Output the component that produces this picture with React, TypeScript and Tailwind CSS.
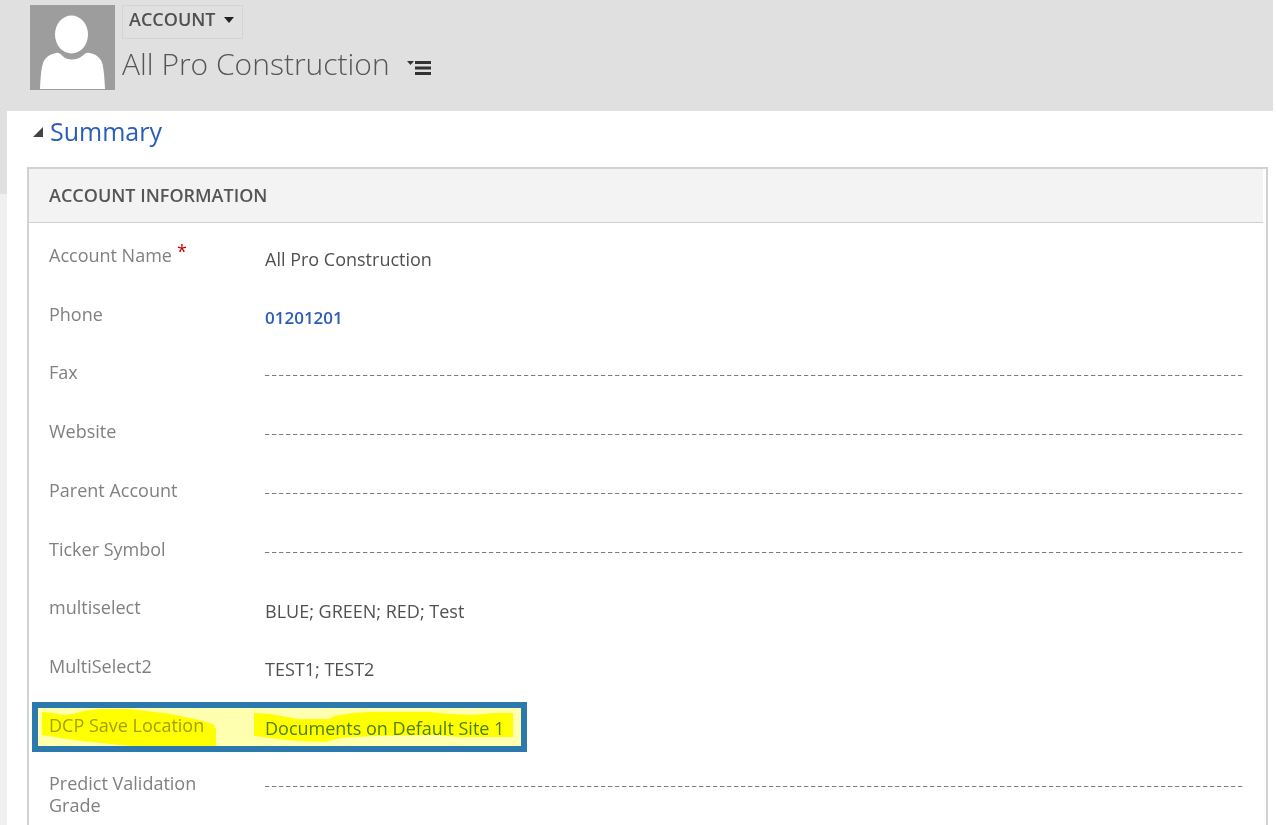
import { useState } from 'react'

type Field = {
  id: string
  label: string
  value?: string
  href?: string
  required?: boolean
  highlighted?: boolean
}

const fields: Field[] = [
  { id: 'name', label: 'Account Name', value: 'All Pro Construction', required: true },
  { id: 'phone', label: 'Phone', value: '01201201', href: 'tel:01201201' },
  { id: 'fax', label: 'Fax' },
  { id: 'website', label: 'Website' },
  { id: 'parent', label: 'Parent Account' },
  { id: 'ticker', label: 'Ticker Symbol' },
  { id: 'multiselect', label: 'multiselect', value: 'BLUE; GREEN; RED; Test' },
  { id: 'multiselect2', label: 'MultiSelect2', value: 'TEST1; TEST2' },
  { id: 'location', label: 'DCP Save Location', value: 'Documents on Default Site 1', highlighted: true },
  { id: 'grade', label: 'Predict Validation Grade' },
]

function Avatar() {
  return (
    <svg width="85" height="85" viewBox="0 0 85 85" role="img" aria-label="Account picture">
      <rect width="85" height="85" fill="#9d9d9d" />
      <ellipse cx="41.5" cy="29.5" rx="16.5" ry="19" fill="#fff" />
      <path
        d="M10 84C10.500 73 11 66 12.500 60C14 53 19 49.500 26 48C28.500 47.500 30 48.500 32 50.500C35 53.500 38.500 54.500 42 54.500C46 54.500 50 53 53.500 50C55.500 48 57 47.500 59.500 48C66 49 71 53 72.500 59C74 66 74.500 74 75 84Z"
        fill="#fff"
      />
    </svg>
  )
}

// Box and marker strokes drawn over the row
function Highlight() {
  return (
    <svg
      className="pointer-events-none absolute -left-[17px] -top-[12px] mix-blend-multiply"
      width="495"
      height="50"
      viewBox="0 0 495 50"
      aria-hidden="true"
    >
      <rect x="3" y="3" width="489" height="44" fill="#ffffb0" stroke="#2c79ae" strokeWidth="6" />
      <path
        d="M10 10L21 11L31 13L41 12L51 9L68 7L98 7L115 9L139 12L158 16L171 19L181 22L184 27L184 44L101 44L87 43L70 41L50 39L34 37L17 34L10 33Z"
        fill="#ffff00"
      />
      <path
        d="M222 11L239 12L255 15L266 17L297 17L302 14L321 11L337 10L397 10L418 12L440 13L462 11L481 11L481 35L426 35L404 33L343 34L309 36L293 40L266 39L237 36L222 34Z"
        fill="#ffff00"
      />
    </svg>
  )
}

function FieldRow({ field }: { field: Field }) {
  const [value, setValue] = useState(field.value ?? '')
  const labelColor = field.highlighted ? 'text-[#a0a050]' : 'text-[#808080]'
  const valueColor = field.highlighted ? 'text-[#4c8010]' : 'text-[#505050]'

  return (
    <div className="relative flex items-start">
      <label htmlFor={field.id} className={`w-[216px] shrink-0 pr-12 leading-[22px] ${labelColor}`}>
        {field.label}
        {field.required && <span className="pl-[5px] align-[4px] leading-[0] text-[#c00000]">*</span>}
      </label>
      {field.href ? (
        <a id={field.id} href={field.href} className="pt-1 text-[17px] font-semibold leading-[22px] text-[#2b5db8]">
          {value}
        </a>
      ) : (
        <input
          id={field.id}
          value={value}
          onChange={(e) => setValue(e.target.value)}
          className={
            value
              ? `mt-1 h-[22px] min-w-0 flex-1 bg-transparent outline-none ${valueColor}`
              : 'h-[15px] min-w-0 flex-1 bg-[repeating-linear-gradient(90deg,#7c7c7c_0_4px,#d8d8d8_4px_5px,transparent_5px_7px)] bg-[length:100%_1px] bg-bottom bg-no-repeat outline-none'
          }
        />
      )}
      {field.highlighted && <Highlight />}
    </div>
  )
}

export default function App() {
  const [open, setOpen] = useState(true)

  return (
    <div className="h-screen overflow-hidden bg-white pr-[3px] font-['Open_Sans','Noto_Sans',sans-serif] text-[18px]">
      <header className="flex h-[111px] gap-[7px] bg-[#e0e0e0] pl-[30px] pt-[5px]">
        <Avatar />
        <div className="flex flex-col items-start">
          <button className="flex h-[34px] items-center gap-2 border border-[#d4d4d4] pl-[6px] pr-2 pb-[5px] font-semibold text-[#505050]">
            ACCOUNT
            <svg width="10" height="6" viewBox="0 0 10 6" aria-hidden="true">
              <path d="M0 0H10L5 6Z" fill="#222" />
            </svg>
          </button>
          <div className="flex items-center gap-[17px]">
            <h1 className="text-[30px] font-light leading-[50px] text-[#555]">All Pro Construction</h1>
            <button aria-label="Record list" className="pt-[6px]">
              <svg width="24" height="15" viewBox="0 0 24 15" fill="#333" aria-hidden="true">
                <path d="M0 1H7L3.500 5Z" />
                <path d="M8 1H24V4H8ZM8 6.500H24V9.500H8ZM8 12H24V15H8Z" />
              </svg>
            </button>
          </div>
        </div>
      </header>

      <div className="flex">
        <div className="h-[714px] w-[7px] shrink-0 bg-[#f0f0f0]">
          <div className="h-[83px] bg-[#e0e0e0]" />
        </div>
        <main className="min-w-0 flex-1 pl-5 pr-[5px]">
          <button
            onClick={() => setOpen(!open)}
            aria-expanded={open}
            className="flex h-[56px] items-start gap-[7px] pl-[6px] pt-px text-[25px] leading-[38px] text-[#2b5db8]"
          >
            <svg className="mt-[15px]" width="10" height="10" viewBox="0 0 10 10" aria-hidden="true">
              <path d="M10 0V10H0Z" fill="#444" />
            </svg>
            Summary
          </button>
          {open && (
            <section className="border-2 border-b-0 border-[#cdd3d2]">
              <h2 className="mr-[3px] h-[54px] border-b border-[#cfcfcf] bg-[#f3f3f3] pl-5 font-semibold leading-[52px] text-[#555]">
                ACCOUNT INFORMATION
              </h2>
              <div className="box-content grid min-h-[587px] auto-rows-fr pl-5 pr-[22px] pt-[21px]">
                {fields.map((field) => (
                  <FieldRow key={field.id} field={field} />
                ))}
              </div>
            </section>
          )}
        </main>
      </div>
    </div>
  )
}
